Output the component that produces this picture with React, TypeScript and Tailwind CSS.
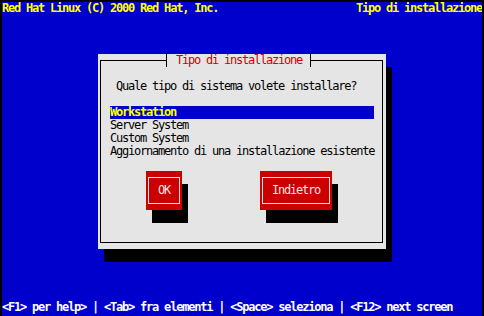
const items = [
  'Workstation',
  'Server System',
  'Custom System',
  'Aggiornamento di una installazione esistente',
];

function Button({ label, width }: { label: string; width: string }) {
  return (
    <div className={`${width} h-[39px] bg-[#cd0000] px-[2px] py-[6px] shadow-[6px_13px_0_#000]`}>
      <div className="h-[27px] border border-[#e5e5e5] flex items-center justify-center">
        <span className="h-[13px] text-[#e5e5e5]">{label}</span>
      </div>
    </div>
  );
}

export default function App() {
  const selected = 0;

  return (
    <div className="w-[484px] h-[316px] overflow-hidden bg-[#0000cd] border-t-2 border-x-2 border-black pb-[2px] flex flex-col font-['DejaVu_Sans_Mono','Liberation_Mono',monospace] text-[12px] leading-[13px] tracking-[-1.22px] whitespace-pre">
      {/* root line */}
      <div className="h-[13px] flex justify-between font-bold text-[#ffff00]">
        <span>Red Hat Linux (C) 2000 Red Hat, Inc.</span>
        <span>Tipo di installazione</span>
      </div>

      {/* dialog */}
      <div className="ml-[96px] mt-[39px] w-[288px] h-[195px] bg-[#e5e5e5] pt-[6px] pb-[6px] pl-[2px] pr-[3px] shadow-[6px_13px_0_#000]">
        <div className="relative h-full border border-black">
          <div className="absolute left-[65px] top-[-7px] w-[145px] h-[13px] border-x border-black bg-[#e5e5e5] pl-[9px] text-[#cd0000]">
            Tipo di installazione
          </div>

          <div className="pl-[9px] pt-[19px]">
            <div className="ml-[6px] h-[13px] text-black">Quale tipo di sistema volete installare?</div>

            <div className="mt-[13px] w-[264px] flex flex-col">
              {items.map((item, i) => (
                <div
                  key={item}
                  className={
                    i === selected
                      ? 'h-[13px] bg-[#0000cd] text-[#ffff00] font-bold'
                      : 'h-[13px] text-black'
                  }
                >
                  {item}
                </div>
              ))}
            </div>

            <div className="mt-[13px] ml-[36px] flex gap-[78px]">
              <Button label="OK" width="w-[36px]" />
              <Button label="Indietro" width="w-[72px]" />
            </div>
          </div>
        </div>
      </div>

      {/* help line */}
      <div className="mt-auto h-[13px] font-bold text-white">
        {'<F1> per help> | <Tab> fra elementi | <Space> seleziona | <F12> next screen'}
      </div>
    </div>
  );
}
